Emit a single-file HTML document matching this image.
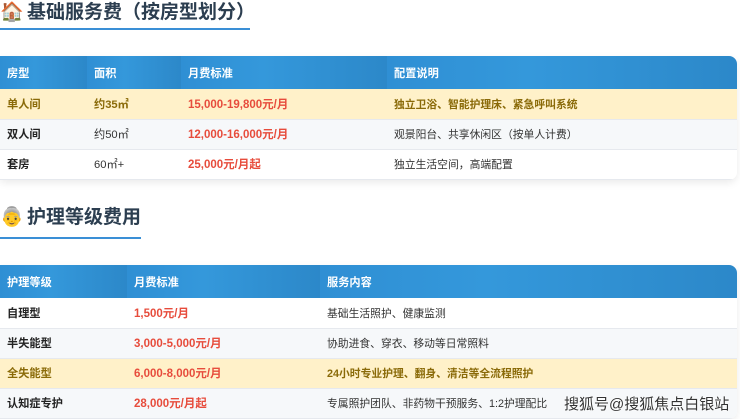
<!DOCTYPE html>
<html><head><meta charset="utf-8"><style>
*{margin:0;padding:0;box-sizing:border-box}
body{width:740px;height:419px;overflow:hidden;background:#fff;font-family:"Liberation Sans","Noto Sans CJK SC",sans-serif;position:relative}
.h{position:absolute;left:0;font-size:19px;font-weight:bold;color:#2c3e50;white-space:nowrap;line-height:26px}
.h .ic{display:inline-block;width:27px;font-size:19px;vertical-align:top}
.ul{position:absolute;left:0;height:2px;background:#3a8fd6}
table{position:absolute;left:0;width:737px;border-collapse:collapse;font-size:11.2px;border-radius:0 8px 8px 0;overflow:hidden;box-shadow:0 3px 8px rgba(0,0,0,.08)}
th{height:33px;text-align:left;color:#fff;font-weight:bold;padding-left:7px;background:linear-gradient(90deg,#2f8fd4 0%,#3498db 40%,#2c88c9 100%);}
td{padding-left:7px;color:#333;border-bottom:1px solid #e6e9ee;height:30px}
td.d{font-size:10.8px}
tr.w td{background:#fff}tr.g td{background:#f6f8fa}
tr.y td{background:#fff1c9;color:#8a6a08;font-weight:bold}
td.b{font-weight:bold;color:#222}
td.r{color:#e74c3c;font-weight:bold;font-size:11.5px}
tr.y td.r{color:#e74c3c}
.wm{position:absolute;left:564px;top:393px;font-size:15px;color:#333;text-shadow:0 0 2px #fff,0 0 2px #fff;letter-spacing:0}
</style></head><body>
<div class="h" style="top:0"><span class="ic">🏠</span>基础服务费（按房型划分）</div>
<div class="ul" style="top:28px;width:250px"></div>
<table style="top:56px">
<tr><th style="width:87px">房型</th><th style="width:94px">面积</th><th style="width:206px">月费标准</th><th>配置说明</th></tr>
<tr class="y"><td>单人间</td><td>约35㎡</td><td class="r">15,000-19,800元/月</td><td class="d">独立卫浴、智能护理床、紧急呼叫系统</td></tr>
<tr class="g"><td class="b">双人间</td><td>约50㎡</td><td class="r">12,000-16,000元/月</td><td class="d">观景阳台、共享休闲区（按单人计费）</td></tr>
<tr class="w"><td class="b">套房</td><td>60㎡+</td><td class="r">25,000元/月起</td><td class="d">独立生活空间，高端配置</td></tr>
</table>
<div class="h" style="top:205px"><span class="ic">👵</span>护理等级费用</div>
<div class="ul" style="top:237px;width:141px"></div>
<table style="top:265px">
<tr><th style="width:127px">护理等级</th><th style="width:193px">月费标准</th><th>服务内容</th></tr>
<tr class="w"><td class="b">自理型</td><td class="r">1,500元/月</td><td class="d">基础生活照护、健康监测</td></tr>
<tr class="g"><td class="b">半失能型</td><td class="r">3,000-5,000元/月</td><td class="d">协助进食、穿衣、移动等日常照料</td></tr>
<tr class="y"><td>全失能型</td><td class="r">6,000-8,000元/月</td><td class="d">24小时专业护理、翻身、清洁等全流程照护</td></tr>
<tr class="g"><td class="b">认知症专护</td><td class="r">28,000元/月起</td><td class="d">专属照护团队、非药物干预服务、1:2护理配比</td></tr>
</table>
<div class="wm">搜狐号@搜狐焦点白银站</div>
</body></html>
